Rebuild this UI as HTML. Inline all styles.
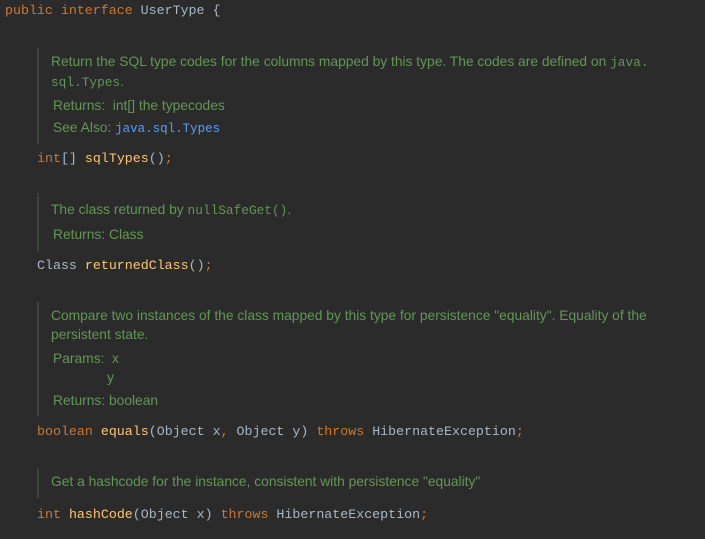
<!DOCTYPE html>
<html><head><meta charset="utf-8"><style>
html,body{margin:0;padding:0;width:705px;height:539px;background:#2b2b2b;overflow:hidden}
.c{position:absolute;font-family:"Liberation Mono",monospace;font-size:13.3px;color:#a9b7c6;white-space:pre;line-height:16px}
.k{color:#cc7832}.m{color:#ffc66d}
.d{position:absolute;font-family:"Liberation Sans",sans-serif;font-size:13.8px;color:#629755;white-space:nowrap;line-height:16px}
.d code{font-family:"Liberation Mono",monospace;font-size:12.8px}
.a{color:#589df6;font-family:"Liberation Mono",monospace;font-size:12.5px}
.b{position:absolute;left:37px;width:2px;background:#3b4636}
</style></head><body>
<div class="c" style="left:5px;top:3px"><span class="k">public interface</span> UserType {</div>

<div class="b" style="top:48px;height:96px"></div>
<div class="d" style="left:51px;top:54px">Return the SQL type codes for the columns mapped by this type. The codes are defined on <code>java.</code></div>
<div class="d" style="left:51px;top:74px"><code>sql.Types</code>.</div>
<div class="d" style="left:53px;top:98px">Returns: &nbsp;int[] the typecodes</div>
<div class="d" style="left:53px;top:120px">See Also: <span class="a">java.sql.Types</span></div>
<div class="c" style="left:37px;top:151px"><span class="k">int</span>[] <span class="m">sqlTypes</span>()<span class="k">;</span></div>

<div class="b" style="top:193px;height:58px"></div>
<div class="d" style="left:51px;top:202px">The class returned by <code>nullSafeGet()</code>.</div>
<div class="d" style="left:53px;top:227px">Returns: Class</div>
<div class="c" style="left:37px;top:258px">Class <span class="m">returnedClass</span>()<span class="k">;</span></div>

<div class="b" style="top:302px;height:114px"></div>
<div class="d" style="left:51px;top:308px">Compare two instances of the class mapped by this type for persistence "equality". Equality of the</div>
<div class="d" style="left:51px;top:327px">persistent state.</div>
<div class="d" style="left:53px;top:351px">Params: &nbsp;x</div>
<div class="d" style="left:107px;top:370px">y</div>
<div class="d" style="left:53px;top:393px">Returns: boolean</div>
<div class="c" style="left:37px;top:424px"><span class="k">boolean</span> <span class="m">equals</span>(Object x<span class="k">,</span> Object y) <span class="k">throws</span> HibernateException<span class="k">;</span></div>

<div class="b" style="top:468px;height:30px"></div>
<div class="d" style="left:51px;top:474px">Get a hashcode for the instance, consistent with persistence "equality"</div>
<div class="c" style="left:37px;top:507px"><span class="k">int</span> <span class="m">hashCode</span>(Object x) <span class="k">throws</span> HibernateException<span class="k">;</span></div>
</body></html>
